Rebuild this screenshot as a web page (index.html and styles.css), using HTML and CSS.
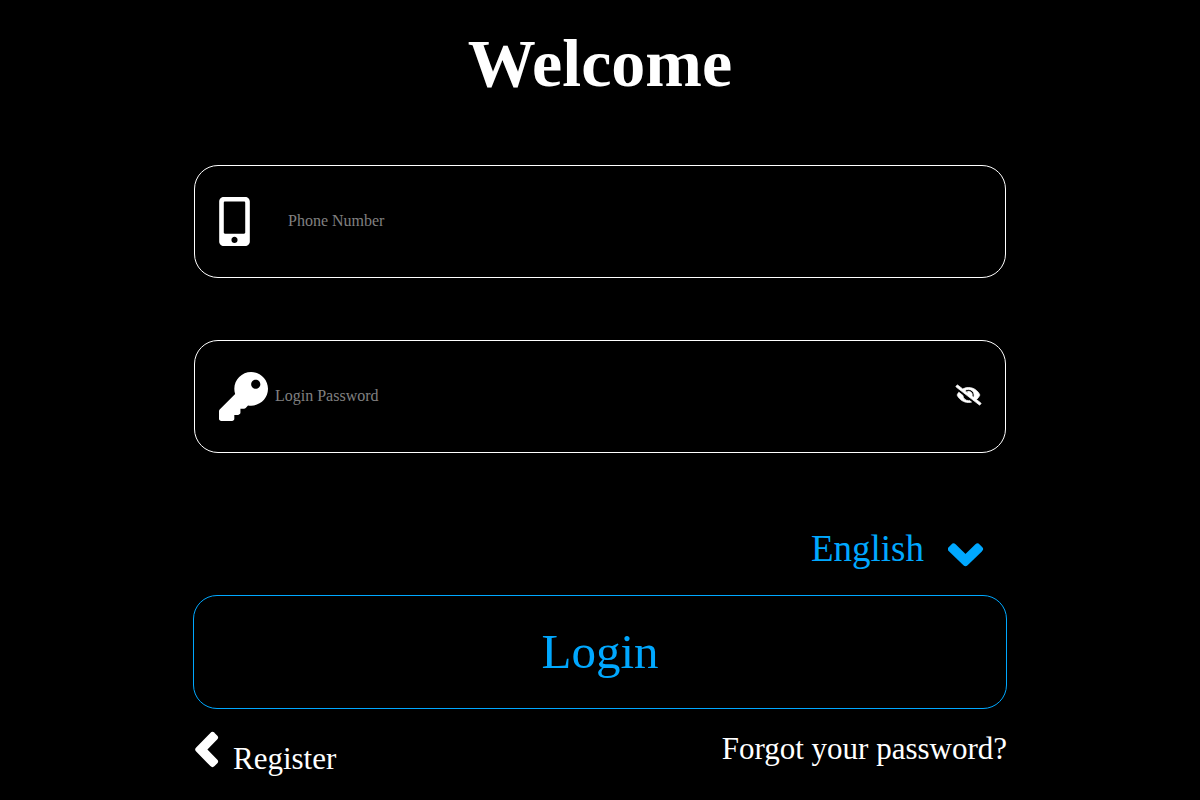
FILE: index.html
```html
<!DOCTYPE html>
<html lang="en">
<head>
    <meta charset="UTF-8">
    <meta name="viewport" content="width=device-width, initial-scale=1.0">
    <title>Login</title>
    <link rel="stylesheet" href="styles.css">
</head>
<body>
    <main class="container">
        <h1>Welcome</h1>

        <form id="loginForm">
            <div class="input-box">
                <label class="phone-label" for="phone" aria-label="Phone Number">
                    <svg class="icon-phone" viewBox="0 0 320 512" aria-hidden="true">
                        <path d="M272 0H48C21.5 0 0 21.5 0 48v416c0 26.5 21.5 48 48 48h224c26.5 0 48-21.5 48-48V48c0-26.5-21.5-48-48-48zM160 480c-17.7 0-32-14.3-32-32s14.3-32 32-32 32 14.3 32 32-14.3 32-32 32zm112-108c0 6.6-5.4 12-12 12H60c-6.6 0-12-5.4-12-12V60c0-6.6 5.4-12 12-12h200c6.6 0 12 5.4 12 12v312z"/>
                    </svg>
                </label>
                <input type="tel" id="phone" name="phone" placeholder="Phone Number">
            </div>

            <div class="input-box">
                <label class="key-label" for="password" aria-label="Login Password">
                    <svg class="icon-key" viewBox="0 0 512 512" aria-hidden="true">
                        <path d="M512 176.001C512 273.203 433.202 352 336 352c-11.22 0-22.19-1.062-32.827-3.069l-24.012 27.014A23.999 23.999 0 0 1 261.223 384H224v40c0 13.255-10.745 24-24 24h-40v40c0 13.255-10.745 24-24 24H24c-13.255 0-24-10.745-24-24v-78.059c0-6.365 2.529-12.47 7.029-16.971l161.802-161.802C163.108 213.814 160 195.271 160 176 160 78.798 238.797.001 335.999 0 433.488-.001 512 78.511 512 176.001zM336 128c0 26.51 21.49 48 48 48s48-21.49 48-48-21.49-48-48-48-48 21.49-48 48z"/>
                    </svg>
                </label>
                <input type="password" id="password" name="password" placeholder="Login Password">
                <button type="button" class="toggle" id="togglePassword" aria-label="Show password">
                    <svg class="icon-eye" viewBox="0 0 640 512" aria-hidden="true">
                        <path d="M320 400c-75.85 0-137.25-58.71-142.9-133.11L72.2 185.82c-13.79 17.3-26.48 35.59-36.72 55.59a32.35 32.35 0 0 0 0 29.19C89.71 376.41 197.07 448 320 448c26.91 0 52.87-4 77.89-10.46L346 397.39a144.13 144.13 0 0 1-26 2.61zm313.82 58.1l-110.55-85.44a331.25 331.25 0 0 0 81.25-102.07 32.35 32.35 0 0 0 0-29.19C550.29 135.59 442.93 64 320 64a308.15 308.15 0 0 0-147.32 37.7L45.46 3.37A16 16 0 0 0 23 6.18L3.37 31.45A16 16 0 0 0 6.18 53.9l588.36 454.73a16 16 0 0 0 22.46-2.81l19.64-25.27a16 16 0 0 0-2.82-22.45zm-183.72-142l-39.3-30.38A94.75 94.75 0 0 0 416 256a94.76 94.76 0 0 0-121.31-92.21A47.65 47.65 0 0 1 304 192a46.64 46.64 0 0 1-1.54 10l-73.61-56.89A142.31 142.31 0 0 1 320 112a143.92 143.92 0 0 1 144 144c0 21.63-5.29 41.79-13.9 60.11z"/>
                    </svg>
                </button>
            </div>

            <div class="language">
                <button type="button" class="language-btn">
                    English
                    <svg class="icon-down" viewBox="0 0 36 24" aria-hidden="true">
                        <path d="M3 6L5.5 3.5L17.5 15.2L29.5 3.5L32 6L17.5 20.2Z"/>
                    </svg>
                </button>
            </div>

            <button type="submit" class="btn">Login</button>
        </form>

        <div class="links">
            <a href="#" class="register">
                <svg class="icon-left" viewBox="0 0 24 36" aria-hidden="true">
                    <path d="M17.5 4L20 6.5L8.3 18.5L20 30.5L17.5 33L3.3 18.5Z"/>
                </svg>
                <span>Register</span>
            </a>
            <a href="#" class="forgot">Forgot your password?</a>
        </div>
    </main>

    <script>
        // Show or hide the password
        document.getElementById('togglePassword').addEventListener('click', function() {
            const password = document.getElementById('password');
            password.type = password.type === 'password' ? 'text' : 'password';
        });

        document.getElementById('loginForm').addEventListener('submit', function(e) {
            e.preventDefault();
        });
    </script>
</body>
</html>
```
FILE: styles.css
```css
* {
    box-sizing: border-box;
}

body {
    margin: 0;
    background-color: #000;
    color: #fff;
    font-family: "Liberation Serif", "Times New Roman", serif;
}

.container {
    width: 68%;
    margin: 0 auto;
    padding: 24px 1px 20px;
}

h1 {
    margin: 0 0 62px;
    font-size: 68px;
    line-height: 79px;
    text-align: center;
}

button,
input {
    border: none;
    padding: 0 0 2px;
    background: none;
    color: inherit;
    font-family: inherit;
}

button {
    cursor: pointer;
}

svg {
    display: block;
    fill: currentColor;
}

.input-box {
    display: flex;
    align-items: center;
    height: 113px;
    margin: 0 1px 62px;
    padding: 0 24px;
    border: 1px solid #fff;
    border-radius: 24px;
}

.input-box input {
    flex: 1;
    min-width: 0;
    height: 48px;
    font-size: 16px;
    outline: none;
}

.input-box input::placeholder {
    color: #808080;
}

.phone-label {
    width: 69px;
}

.key-label {
    width: 56px;
}

.icon-phone {
    width: 31px;
    height: 49px;
}

.icon-key {
    width: 49px;
    height: 49px;
}

.toggle {
    padding-bottom: 3px;
}

.icon-eye {
    width: 25px;
    height: 20px;
    stroke: currentColor;
    stroke-width: 20;
    overflow: visible;
}

.language {
    display: flex;
    justify-content: flex-end;
    padding: 12px 23px 22px 0;
}

.language-btn {
    display: flex;
    align-items: center;
    gap: 24px;
    color: #00a8ff;
    font-size: 37px;
    line-height: 44px;
}

.icon-down {
    width: 36px;
    height: 24px;
    margin-top: 12px;
}

.icon-down,
.icon-left {
    stroke: currentColor;
    stroke-width: 6;
    stroke-linejoin: round;
}

.btn {
    display: block;
    width: 100%;
    height: 114px;
    border: 1px solid #00a8ff;
    border-radius: 24px;
    color: #00a8ff;
    font-size: 49px;
}

.links {
    display: flex;
    justify-content: space-between;
    align-items: flex-start;
    margin-top: 22px;
    font-size: 31px;
    line-height: 36px;
}

.links a {
    color: #fff;
    text-decoration: none;
}

.register {
    display: flex;
    gap: 14px;
    padding-left: 2px;
}

.register span {
    margin-top: 10px;
}

.icon-left {
    width: 24px;
    height: 36px;
    overflow: visible;
}
```
